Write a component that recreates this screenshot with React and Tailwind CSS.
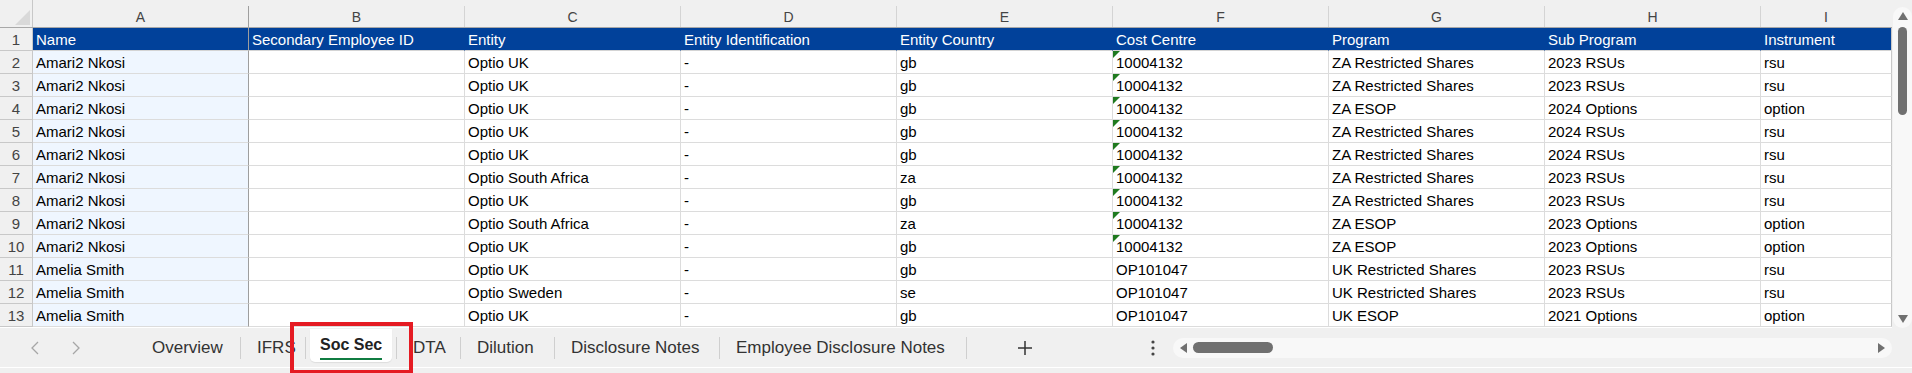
import React from "react";

const letters = ["A", "B", "C", "D", "E", "F", "G", "H", "I"];

const headers = [
  "Name",
  "Secondary Employee ID",
  "Entity",
  "Entity Identification",
  "Entity Country",
  "Cost Centre",
  "Program",
  "Sub Program",
  "Instrument",
];

const rows = [
  ["Amari2 Nkosi", "", "Optio UK", "-", "gb", "10004132", "ZA Restricted Shares", "2023 RSUs", "rsu"],
  ["Amari2 Nkosi", "", "Optio UK", "-", "gb", "10004132", "ZA Restricted Shares", "2023 RSUs", "rsu"],
  ["Amari2 Nkosi", "", "Optio UK", "-", "gb", "10004132", "ZA ESOP", "2024 Options", "option"],
  ["Amari2 Nkosi", "", "Optio UK", "-", "gb", "10004132", "ZA Restricted Shares", "2024 RSUs", "rsu"],
  ["Amari2 Nkosi", "", "Optio UK", "-", "gb", "10004132", "ZA Restricted Shares", "2024 RSUs", "rsu"],
  ["Amari2 Nkosi", "", "Optio South Africa", "-", "za", "10004132", "ZA Restricted Shares", "2023 RSUs", "rsu"],
  ["Amari2 Nkosi", "", "Optio UK", "-", "gb", "10004132", "ZA Restricted Shares", "2023 RSUs", "rsu"],
  ["Amari2 Nkosi", "", "Optio South Africa", "-", "za", "10004132", "ZA ESOP", "2023 Options", "option"],
  ["Amari2 Nkosi", "", "Optio UK", "-", "gb", "10004132", "ZA ESOP", "2023 Options", "option"],
  ["Amelia Smith", "", "Optio UK", "-", "gb", "OP101047", "UK Restricted Shares", "2023 RSUs", "rsu"],
  ["Amelia Smith", "", "Optio Sweden", "-", "se", "OP101047", "UK Restricted Shares", "2023 RSUs", "rsu"],
  ["Amelia Smith", "", "Optio UK", "-", "gb", "OP101047", "UK ESOP", "2021 Options", "option"],
];

const tabs = [
  { name: "Overview", w: "w-[104px]" },
  { name: "IFRS", w: "w-[64px]" },
  { name: "Soc Sec", w: "w-[90px]", active: true },
  { name: "DTA", w: "w-[63px]" },
  { name: "Dilution", w: "w-[93px]" },
  { name: "Disclosure Notes", w: "w-[164px]" },
  { name: "Employee Disclosure Notes", w: "w-[246px]" },
];

function colWidth(i) {
  return i === 8 ? "w-[131px]" : "w-[216px]";
}

function Sep() {
  return <div className="w-px h-[22px] bg-[#cfcfcf] shrink-0" />;
}

export default function App() {
  return (
    <div className="relative w-[1912px] h-[373px] overflow-hidden bg-[#f0f0f0] font-['Liberation_Sans',Arial,sans-serif] text-[15px] text-black">
      <div className="flex h-[328px]">
        {/* sheet grid */}
        <div className="w-[1892px] flex flex-col bg-white">
          {/* column letters */}
          <div className="flex h-[28px] bg-[#f0f0f0] border-b border-[#a8a8a8]">
            <div className="w-[33px] shrink-0 border-r border-[#c8c8c8] flex items-start pt-[10px] pl-[15px]">
              <svg width="15" height="15" viewBox="0 0 15 15">
                <polygon points="15,0 15,15 0,15" fill="#d9d9d9" />
              </svg>
            </div>
            {letters.map((l, i) => (
              <div key={l} className={`${colWidth(i)} shrink-0 h-full flex items-end`}>
                <div
                  className={`w-full h-[21px] text-center text-[14px] leading-[22px] text-[#444] border-r ${
                    i === 0 ? "border-[#9e9e9e]" : i === 8 ? "border-transparent" : "border-[#d4d4d4]"
                  }`}
                >
                  {l}
                </div>
              </div>
            ))}
          </div>

          {/* header row 1 */}
          <div className="flex h-[23px]">
            <div className="w-[33px] shrink-0 bg-[#f0f0f0] border-r border-b border-[#c8c8c8] text-center text-[#444] leading-[22px] pt-[1px]">
              1
            </div>
            {headers.map((h, i) => (
              <div
                key={h}
                className={`${colWidth(i)} shrink-0 bg-[#01419a] text-white pl-[3px] leading-[22px] pt-[1px] whitespace-nowrap overflow-hidden border-b border-[#d4d4d4] border-r ${
                  i === 0 ? "border-r-[#9e9e9e]" : i === 8 ? "border-r-[#c8c8c8]" : "border-r-[#01419a]"
                }`}
              >
                {h}
              </div>
            ))}
          </div>

          {/* data rows */}
          {rows.map((r, ri) => (
            <div key={ri} className="flex h-[23px]">
              <div className="w-[33px] shrink-0 bg-[#f0f0f0] border-r border-b border-[#c8c8c8] text-center text-[#444] leading-[22px] pt-[1px]">
                {ri + 2}
              </div>
              {r.map((c, ci) => (
                <div
                  key={ci}
                  className={`${colWidth(ci)} relative shrink-0 pl-[3px] leading-[22px] pt-[1px] whitespace-nowrap overflow-hidden border-b border-[#dcdcdc] border-r ${
                    ci === 0 ? "bg-[#eff6ff] border-r-[#9e9e9e]" : ci === 8 ? "border-r-[#c8c8c8]" : ""
                  }`}
                >
                  {ci === 5 && c.startsWith("1000") && (
                    <svg className="absolute left-0 top-0" width="7" height="7" viewBox="0 0 7 7">
                      <polygon points="0,0 7,0 0,7" fill="#1f7a1f" />
                    </svg>
                  )}
                  {c}
                </div>
              ))}
            </div>
          ))}
        </div>

        {/* vertical scrollbar */}
        <div className="w-[20px] pt-[7px] pl-px flex">
          <div className="w-[19px] h-[321px] rounded-full bg-[#f8f8f8] flex flex-col items-center pt-[5px]">
            <svg width="10" height="8" viewBox="0 0 10 8">
              <polygon points="5,0 10,8 0,8" fill="#707070" />
            </svg>
            <div className="mt-[7px] w-[9px] h-[88px] rounded-full bg-[#707070]" />
            <div className="flex-1" />
            <svg width="10" height="8" viewBox="0 0 10 8" className="mb-[5px]">
              <polygon points="0,0 10,0 5,8" fill="#707070" />
            </svg>
          </div>
        </div>
      </div>

      {/* sheet tabs bar */}
      <div className="flex items-center h-[40px] border-b border-white text-[17px] text-[#333]">
        <div className="w-[136px] shrink-0 flex items-center">
          <svg className="ml-[31px]" width="8" height="14" viewBox="0 0 8 14">
            <polyline points="7,1 1,7 7,13" fill="none" stroke="#a6a6a6" strokeWidth="1.3" />
          </svg>
          <svg className="ml-[33px]" width="8" height="14" viewBox="0 0 8 14">
            <polyline points="1,1 7,7 1,13" fill="none" stroke="#a6a6a6" strokeWidth="1.3" />
          </svg>
        </div>

        {tabs.map((t, i) => (
          <React.Fragment key={t.name}>
            {i > 0 && <Sep />}
            {t.active ? (
              <div className={`${t.w} shrink-0 h-full px-[4px] pb-[5px] pt-px`}>
                <div className="h-full bg-white rounded-b-[5px] shadow-[0_1px_1px_rgba(0,0,0,0.08)] pl-[10px] flex flex-col justify-center">
                  <div className="w-fit text-[16px] font-bold text-[#222] leading-[20px] pt-[3px]">
                    {t.name}
                    <div className="mt-[3px] h-[2px] bg-[#107c41]" />
                  </div>
                </div>
              </div>
            ) : (
              <div className={`${t.w} shrink-0 pl-4 whitespace-nowrap leading-[20px]`}>{t.name}</div>
            )}
          </React.Fragment>
        ))}
        <Sep />

        <svg className="ml-[51px] shrink-0" width="14" height="14" viewBox="0 0 14 14">
          <line x1="7" y1="0" x2="7" y2="14" stroke="#333" strokeWidth="1.5" />
          <line x1="0" y1="7" x2="14" y2="7" stroke="#333" strokeWidth="1.5" />
        </svg>

        <svg className="ml-[117px] shrink-0" width="8" height="16" viewBox="0 0 8 16">
          <circle cx="4" cy="2" r="1.6" fill="#444" />
          <circle cx="4" cy="8" r="1.6" fill="#444" />
          <circle cx="4" cy="14" r="1.6" fill="#444" />
        </svg>

        <div className="ml-[16px] w-[719px] h-[20px] shrink-0 rounded-full bg-[#f8f8f8] flex items-center pl-[7px] pr-[7px]">
          <svg width="7" height="10" viewBox="0 0 7 10">
            <polygon points="7,0 7,10 0,5" fill="#707070" />
          </svg>
          <div className="ml-[6px] w-[80px] h-[11px] rounded-full bg-[#707070]" />
          <div className="flex-1" />
          <svg width="7" height="10" viewBox="0 0 7 10">
            <polygon points="0,0 7,5 0,10" fill="#707070" />
          </svg>
        </div>
      </div>

      {/* red highlight around the active tab */}
      <div className="absolute left-[290px] top-[322px] w-[123px] h-[52px] border-[4px] border-[#e51b23] pointer-events-none" />
    </div>
  );
}
